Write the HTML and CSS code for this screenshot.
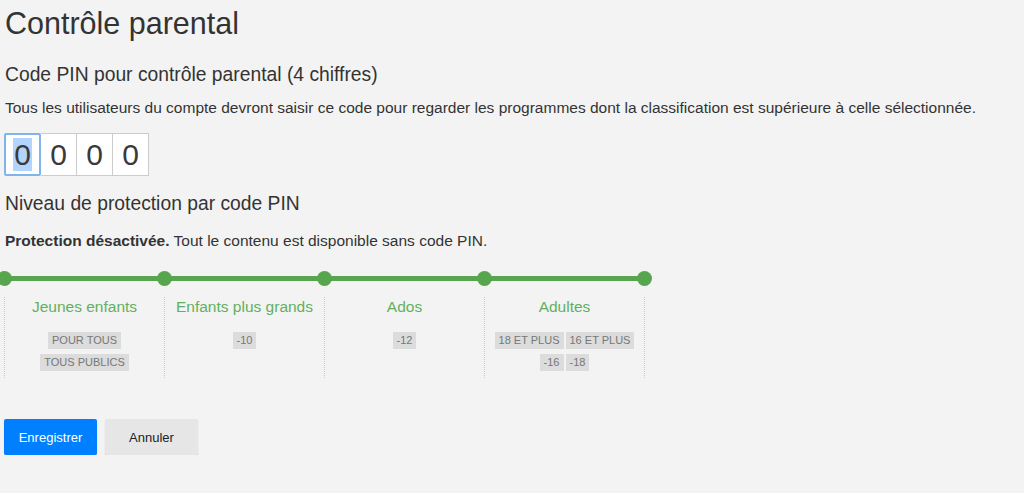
FILE: index.html
```html
<!DOCTYPE html>
<html lang="fr">
<head>
<meta charset="utf-8">
<title>Contrôle parental</title>
<link rel="stylesheet" href="styles.css">
</head>
<body>
<main class="page">
  <h1 class="title">Contrôle parental</h1>
  <h2 class="subtitle subtitle-pin">Code PIN pour contrôle parental (4 chiffres)</h2>
  <p class="text text-pin">Tous les utilisateurs du compte devront saisir ce code pour regarder les programmes dont la classification est supérieure à celle sélectionnée.</p>
  <div class="pin">
    <div class="pin-box pin-box-focus"><span class="pin-sel">0</span></div>
    <div class="pin-box">0</div>
    <div class="pin-box">0</div>
    <div class="pin-box">0</div>
  </div>
  <h2 class="subtitle subtitle-level">Niveau de protection par code PIN</h2>
  <p class="text text-level"><strong>Protection désactivée.</strong> Tout le contenu est disponible sans code PIN.</p>
  <div class="timeline">
    <span class="dot"></span><span class="dot"></span><span class="dot"></span><span class="dot"></span><span class="dot"></span>
  </div>
  <div class="levels">
    <div class="level">
      <div class="level-name">Jeunes enfants</div>
      <div class="badges"><span class="badge">POUR TOUS</span><span class="badge">TOUS PUBLICS</span></div>
    </div>
    <div class="level">
      <div class="level-name">Enfants plus grands</div>
      <div class="badges"><span class="badge">-10</span></div>
    </div>
    <div class="level">
      <div class="level-name">Ados</div>
      <div class="badges"><span class="badge">-12</span></div>
    </div>
    <div class="level level-last">
      <div class="level-name">Adultes</div>
      <div class="badges badges-wide"><span class="badge">18 ET PLUS</span><span class="badge">16 ET PLUS</span><span class="badge">-16</span><span class="badge">-18</span></div>
    </div>
  </div>
  <div class="actions">
    <button class="btn btn-primary" type="button">Enregistrer</button>
    <button class="btn btn-secondary" type="button">Annuler</button>
  </div>
</main>
</body>
</html>
```

FILE: styles.css
```css
html, body {
  margin: 0;
  padding: 0;
  background: #f3f3f3;
}
body {
  font-family: "Liberation Sans", Arial, sans-serif;
  color: #333;
  overflow: hidden;
}
.page {
  padding: 5px 0 0 5px;
}
.title {
  margin: 0;
  font-size: 30.5px;
  line-height: 36px;
  font-weight: 400;
  color: #333;
}
.subtitle {
  margin: 0;
  font-size: 19.3px;
  line-height: 23px;
  font-weight: 400;
  color: #333;
}
.subtitle-pin {
  margin-top: 22px;
}
.text {
  margin: 0;
  font-size: 15.5px;
  line-height: 20px;
  color: #333;
}
.text strong {
  font-weight: 700;
}
.text-pin {
  margin-top: 12px;
}
.pin {
  display: flex;
  margin: 15px 0 0 -1px;
  width: max-content;
}
.pin-box {
  width: 36px;
  height: 43px;
  box-sizing: border-box;
  border: 1px solid #ccc;
  border-left: none;
  background: #fff;
  font-size: 30px;
  line-height: 41px;
  text-align: center;
  color: #3a3a3a;
}
.pin-box-focus {
  width: 37px;
  border: 2px solid #7fb5ea;
  border-radius: 2px;
  line-height: 39px;
}
.pin-sel {
  background: #b3d4fc;
  padding: 0 1px;
}
.subtitle-level {
  margin-top: 16px;
}
.text-level {
  margin-top: 16px;
}
.timeline {
  display: flex;
  justify-content: space-between;
  align-items: center;
  width: 655px;
  height: 15px;
  margin: 20px 0 0 -8px;
  background: linear-gradient(#58a54f, #58a54f) no-repeat center / calc(100% - 16px) 5px;
}
.dot {
  width: 15px;
  height: 15px;
  border-radius: 50%;
  background: #58a54f;
}
.levels {
  display: flex;
  margin: 11px 0 0 -1px;
}
.level {
  width: 160px;
  height: 81px;
  box-sizing: border-box;
  border-left: 1px dotted #c8c8c8;
  text-align: center;
  padding-top: 1px;
}
.level-last {
  width: 161px;
  border-right: 1px dotted #c8c8c8;
}
.level-name {
  font-size: 15.5px;
  line-height: 18px;
  color: #62b05e;
}
.badges {
  display: flex;
  flex-direction: column;
  align-items: center;
  gap: 5px;
  margin-top: 16px;
}
.badges-wide {
  flex-direction: row;
  flex-wrap: wrap;
  justify-content: center;
  gap: 5px 2px;
}
.badge {
  display: inline-block;
  background: #dcdcdc;
  color: #777;
  font-size: 11px;
  line-height: 17px;
  padding: 0 4px;
}
.actions {
  display: flex;
  gap: 8px;
  margin: 41px 0 0 -1px;
}
.btn {
  width: 93px;
  height: 36px;
  border: none;
  border-radius: 2px;
  font-family: "Liberation Sans", Arial, sans-serif;
  font-size: 13px;
  cursor: pointer;
}
.btn-primary {
  background: #0080ff;
  color: #fff;
  box-shadow: 0 1px 1px rgba(0,0,0,0.25);
}
.btn-secondary {
  background: #e6e6e6;
  color: #222;
  box-shadow: 0 1px 1px rgba(0,0,0,0.2);
}
```
